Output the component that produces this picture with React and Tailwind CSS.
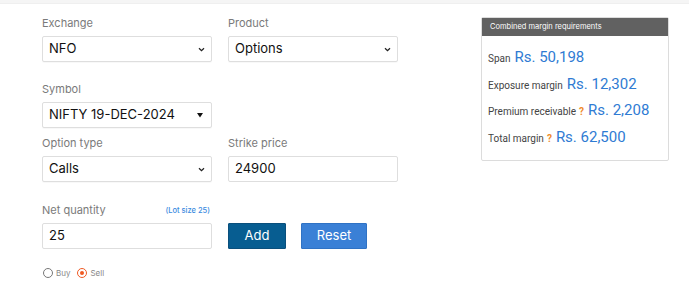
import React from "react";

const Chevron = () => (
  <svg width="7" height="5" viewBox="0 0 7 5" className="shrink-0">
    <path d="M1 1.2 L3.5 3.6 L6 1.2" fill="none" stroke="#222" strokeWidth="1.3" />
  </svg>
);

const Label = ({ children, right }) => (
  <div className="flex items-end justify-between h-[14px] mb-[6px]">
    <span className="text-[11px] leading-[14px] text-[#7a7a7a]">{children}</span>
    {right}
  </div>
);

const SelectBox = ({ value, tri }) => (
  <div className="h-[26px] w-[170px] border border-[#dedede] rounded-[2px] bg-white flex items-center justify-between pl-[6px] pr-[6px] shadow-[0_1px_1px_rgba(0,0,0,0.03)]">
    <span className="text-[13px] text-[#111]">{value}</span>
    {tri ? (
      <svg width="6" height="5" viewBox="0 0 6 5" className="mr-[2px]"><path d="M0 0 H6 L3 4.5 Z" fill="#111" /></svg>
    ) : (
      <Chevron />
    )}
  </div>
);

const InputBox = ({ value }) => (
  <div className="h-[26px] w-[170px] border border-[#dedede] rounded-[2px] bg-white flex items-center pl-[6px]">
    <span className="text-[13px] text-[#111]">{value}</span>
  </div>
);

const Row = ({ label, value, q }) => (
  <div className="flex items-baseline h-[26.5px] whitespace-nowrap" style={{ fontFamily: "Roboto, Inter, sans-serif" }}>
    <span className="text-[10px] text-[#444]">{label}</span>
    {q && <span className="text-[10px] font-bold text-[#f0892a] ml-[3px]">?</span>}
    <span className="text-[15px] text-[#2f7bd3] ml-[4px]">{value}</span>
  </div>
);

export default function App() {
  return (
    <div className="w-[689px] h-[294px] bg-white overflow-hidden" style={{ fontFamily: "Inter, 'Noto Sans', sans-serif" }}>
      <div className="h-[4px] bg-[#f5f5f5] border-b border-[#efefef]" />
      <div className="flex">
        <div className="pl-[42px] pt-[12px] w-[439px]">
          <div className="flex gap-[16px]">
            <div>
              <Label>Exchange</Label>
              <SelectBox value="NFO" />
            </div>
            <div>
              <Label>Product</Label>
              <SelectBox value="Options" />
            </div>
          </div>
          <div className="mt-[20px]">
            <Label>Symbol</Label>
            <SelectBox value="NIFTY 19-DEC-2024" tri />
          </div>
          <div className="flex gap-[16px] mt-[8px]">
            <div>
              <Label>Option type</Label>
              <SelectBox value="Calls" />
            </div>
            <div>
              <Label>Strike price</Label>
              <InputBox value="24900" />
            </div>
          </div>
          <div className="flex gap-[16px] mt-[21px] items-end">
            <div>
              <Label right={<span className="text-[7.5px] leading-[12px] font-medium text-[#3b8be0] mr-[2px]">(Lot size 25)</span>}>Net quantity</Label>
              <InputBox value="25" />
            </div>
            <div className="flex gap-[15px]">
              <div className="h-[26px] w-[58px] bg-[#075d91] border border-[#0a4f7c] rounded-[1px] flex items-center justify-center text-[13px] text-white">Add</div>
              <div className="h-[26px] w-[66px] bg-[#3a80d6] border border-[#2f72c4] rounded-[1px] flex items-center justify-center text-[13px] text-white">Reset</div>
            </div>
          </div>
          <div className="flex items-center mt-[18px] h-[12px]">
            <span className="w-[10px] h-[10px] rounded-full border border-[#777] ml-[1px]" />
            <span className="text-[8px] text-[#888] ml-[3px]">Buy</span>
            <span className="w-[10px] h-[10px] rounded-full border-[1.5px] border-[#ef5a24] ml-[7px] flex items-center justify-center">
              <span className="w-[4px] h-[4px] rounded-full bg-[#ef5a24]" />
            </span>
            <span className="text-[8px] text-[#888] ml-[3px]">Sell</span>
          </div>
        </div>
        <div className="ml-[42px] mt-[13px] w-[188px] h-[144px] border border-[#dcdcdc] rounded-[2px]">
          <div className="h-[18px] bg-[#616161] flex items-center pl-[8px] text-[7.5px] text-white">Combined margin requirements</div>
          <div className="pl-[6px] pt-[10px]">
            <Row label="Span" value="Rs. 50,198" />
            <Row label="Exposure margin" value="Rs. 12,302" />
            <Row label="Premium receivable" value="Rs. 2,208" q />
            <Row label="Total margin" value="Rs. 62,500" q />
          </div>
        </div>
      </div>
    </div>
  );
}
